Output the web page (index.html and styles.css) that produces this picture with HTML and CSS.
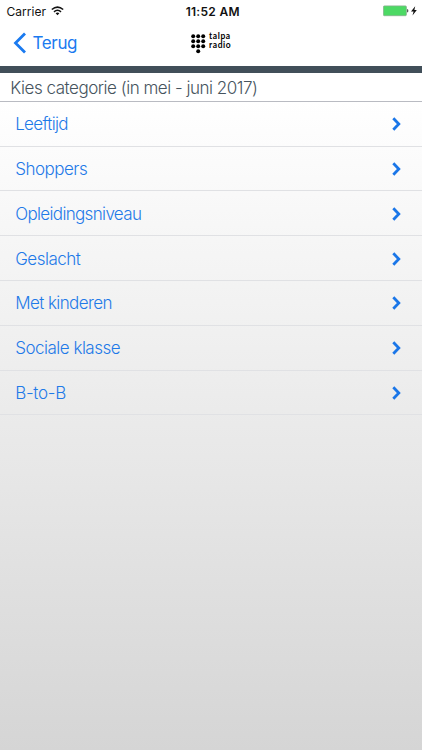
FILE: index.html
```html
<!DOCTYPE html>
<html lang="nl">
<head>
<meta charset="utf-8">
<title>Talpa Radio</title>
<link rel="stylesheet" href="styles.css">
</head>
<body>
<div class="status">
  <div class="carrier"><span>Carrier</span>
    <svg width="13" height="10" viewBox="0 0 13 10"><g fill="none" stroke="#111" stroke-width="1.6"><path d="M.8 3.5Q6.5-1.4 12.2 3.5"/><path d="M3 5.8Q6.5 2.7 10 5.8"/></g><path d="M4.6 7.3Q6.5 5.8 8.4 7.3L6.5 9.3Z" fill="#111"/></svg>
  </div>
  <div class="time">11:52 AM</div>
  <div class="power">
    <svg width="36" height="12" viewBox="0 0 36 12"><rect x=".4" y=".9" width="23" height="9.8" rx="1" fill="#4cd964" stroke="#86b08d" stroke-width=".8"/><path d="M24.1 4.2h.9q.7 1.5 0 3h-.9z" fill="#444"/><path d="M32.2 1.2 28 6.5H30.6L29.5 10.5 33.8 5H31.4Z" fill="#111"/></svg>
  </div>
</div>
<header class="nav">
  <a class="back"><svg width="14" height="22" viewBox="0 0 14 22"><path d="M12 1.5 2.5 11 12 20.5" fill="none" stroke="#1a7af0" stroke-width="2.8"/></svg><span>Terug</span></a>
  <div class="logo">
    <svg width="15" height="20" viewBox="0 0 15 20"><g fill="#000"><circle cx="2.2" cy="2.2" r="2"/><circle cx="7.2" cy="2.2" r="2"/><circle cx="12.2" cy="2.2" r="2"/><circle cx="2.2" cy="7.2" r="2"/><circle cx="7.2" cy="7.2" r="2"/><circle cx="12.2" cy="7.2" r="2"/><circle cx="2.2" cy="12.2" r="2"/><circle cx="7.2" cy="12.2" r="2"/><circle cx="12.2" cy="12.2" r="2"/><circle cx="7.2" cy="17.2" r="2"/></g></svg>
    <div class="logo-text"><span class="talpa">talpa</span><span class="radio">radio</span></div>
  </div>
</header>
<main>
  <h1>Kies categorie (in mei - juni 2017)</h1>
  <ul>
    <li><span class="tight">Leeftijd</span><svg class="chev" viewBox="0 0 9 14"><path d="M1.3 1.3 6.8 7 1.3 12.7"/></svg></li>
    <li><span>Shoppers</span><svg class="chev" viewBox="0 0 9 14"><path d="M1.3 1.3 6.8 7 1.3 12.7"/></svg></li>
    <li><span class="tight">Opleidingsniveau</span><svg class="chev" viewBox="0 0 9 14"><path d="M1.3 1.3 6.8 7 1.3 12.7"/></svg></li>
    <li><span>Geslacht</span><svg class="chev" viewBox="0 0 9 14"><path d="M1.3 1.3 6.8 7 1.3 12.7"/></svg></li>
    <li><span class="snug">Met kinderen</span><svg class="chev" viewBox="0 0 9 14"><path d="M1.3 1.3 6.8 7 1.3 12.7"/></svg></li>
    <li><span>Sociale klasse</span><svg class="chev" viewBox="0 0 9 14"><path d="M1.3 1.3 6.8 7 1.3 12.7"/></svg></li>
    <li><span class="loose">B-to-B</span><svg class="chev" viewBox="0 0 9 14"><path d="M1.3 1.3 6.8 7 1.3 12.7"/></svg></li>
  </ul>
</main>
</body>
</html>
```
FILE: styles.css
```css
* { box-sizing: border-box; }
body { margin: 0; height: 750px; overflow: hidden; display: flex; flex-direction: column; background: #fff; font-family: Inter, "Liberation Sans", sans-serif; }
svg { display: block; flex: none; }
.status { height: 22px; display: grid; grid-template-columns: 1fr auto 1fr; align-items: center; font-size: 12px; color: #111; padding: 0 3px 0 6.5px; }
.carrier { display: flex; align-items: center; gap: 4.5px; letter-spacing: .05px; }
.time { font-weight: 600; letter-spacing: .3px; }
.power { display: flex; justify-content: flex-end; }
.nav { height: 43.5px; display: grid; grid-template-columns: 191px 1fr; align-items: center; padding-bottom: 1.5px; }
.back { display: flex; align-items: center; gap: 6px; padding-left: 12.5px; color: #1a7af0; font-size: 17px; letter-spacing: -.35px; }
.logo { display: flex; gap: 3px; padding-top: 1.5px; }
.logo-text { display: flex; flex-direction: column; margin-top: -1.5px; font: 700 8.5px/9px Lato, sans-serif; letter-spacing: .6px; color: #000; }
main { flex: 1; border-top: 7px solid #414f59; background: linear-gradient(#fff 0, #fff 28px, #d5d5d5 100%); }
h1 { margin: 0; height: 29px; border-bottom: 1px solid #b9bbc2; padding-left: 10.3px; font-size: 17px; font-weight: 300; line-height: 30px; letter-spacing: -.48px; color: #46545e; white-space: nowrap; }
ul { margin: 0; padding: .4px 0 0; list-style: none; }
li { height: 44.8px; border-bottom: 1px solid #e0e1e4; display: flex; align-items: center; justify-content: space-between; padding: .8px 21px 0 15.2px; font-size: 17px; font-weight: 300; letter-spacing: -.5px; color: #1f7ae8; }
.tight { letter-spacing: -.66px; }
.snug { letter-spacing: -.58px; }
.loose { letter-spacing: -.3px; }
.chev { width: 9px; height: 14px; fill: none; stroke: #1a76e8; stroke-width: 2.8; }
```
